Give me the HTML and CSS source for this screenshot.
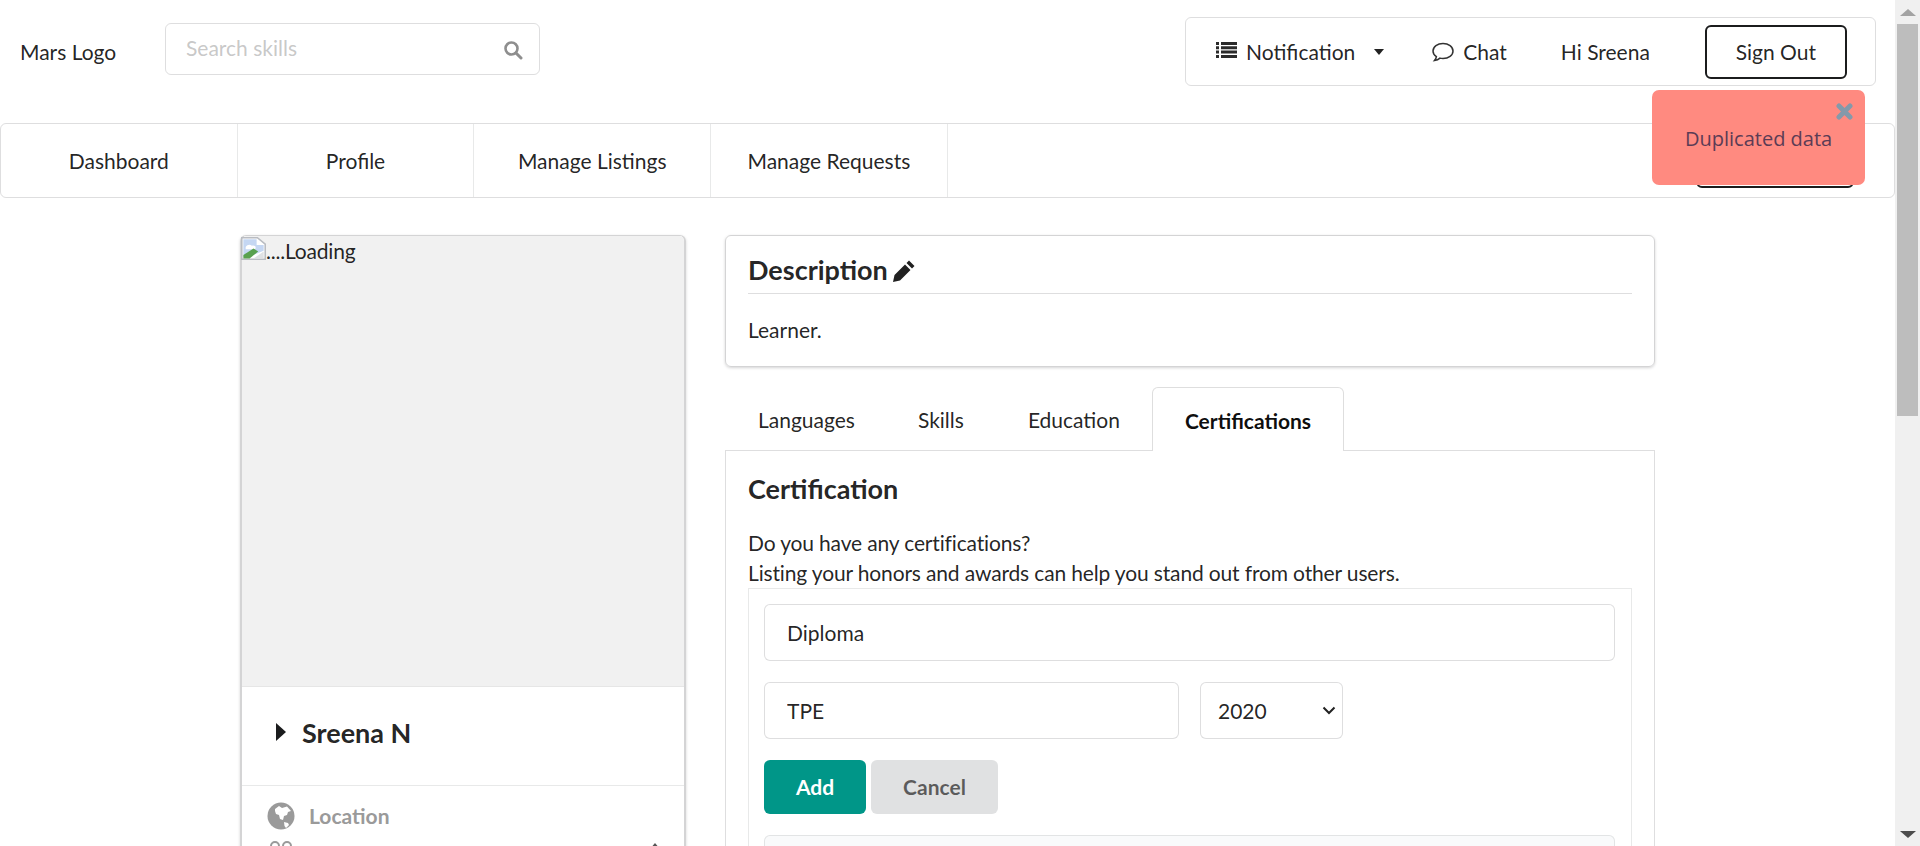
FILE: index.html
```html
<!DOCTYPE html>
<html lang="en">
<head>
<meta charset="utf-8">
<title>Profile</title>
<link rel="stylesheet" href="styles.css">
</head>
<body>
<div class="page">
  <div class="content">
    <header class="topbar">
      <div class="logo">Mars Logo</div>
      <div class="search">
        <span class="placeholder">Search skills</span>
        <svg class="search-icon" viewBox="0 0 20 20"><circle cx="8.5" cy="8.5" r="6" fill="none" stroke="currentColor" stroke-width="2.6"/><path d="M13 13l5 5" stroke="currentColor" stroke-width="3" stroke-linecap="round"/></svg>
      </div>
      <div class="usermenu">
        <svg class="list-icon" viewBox="0 0 21 16"><path d="M0 0h3v3H0zM5 0h16v3H5zM0 4.3h3v3H0zM5 4.3h16v3H5zM0 8.6h3v3H0zM5 8.6h16v3H5zM0 13h3v3H0zM5 13h16v3H5z" fill="currentColor"/></svg>
        <span class="notif">Notification</span>
        <span class="caret"></span>
        <svg class="chat-icon" viewBox="0 0 24 22"><path d="M12 2.500c5.500 0 10 3 10 7.500s-4.500 7.500-10 7.500c-1 0-2-.1-3-.4-1.300 1.200-3 2.100-5.500 2.400 1-1.200 1.700-2.500 1.900-3.900C3.400 14.300 2 12.300 2 10c0-4.500 4.500-7.500 10-7.500z" fill="none" stroke="currentColor" stroke-width="1.500"/></svg>
        <span class="chat">Chat</span>
        <span class="hi">Hi Sreena</span>
        <button class="signout">Sign Out</button>
      </div>
    </header>
    <nav class="mainnav">
      <a class="navitem">Dashboard</a>
      <a class="navitem">Profile</a>
      <a class="navitem">Manage Listings</a>
      <a class="navitem">Manage Requests</a>
      <span class="navbtn"></span>
    </nav>
    <main class="columns">
      <aside class="profile">
        <div class="photo">
          <svg class="broken" viewBox="0 0 16 16" preserveAspectRatio="none"><path d="M.5.5h10L15.500 5v10.500H.5z" fill="#fff" stroke="#b9bcc2"/><path d="M1.500 1.500h8.500v4h4.500v4L9 12 1.500 14z" fill="#c5d7f3"/><path d="M3 7c1-2 3-2 4-1 2-.5 3 1 2 2.500H3z" fill="#fff"/><path d="M1.500 15v-2.500L8 8l3 2-5.500 5z" fill="#59a14f"/><path d="M8 15l6.500-5v5z" fill="#dfe1e4"/></svg><span class="alt">....Loading</span>
        </div>
        <div class="namerow">
          <span class="tri"></span>
          <span class="name">Sreena N</span>
        </div>
        <div class="infolist">
          <div class="inforow">
            <svg class="globe" viewBox="0 0 28 28"><circle cx="14" cy="14" r="13.500" fill="currentColor"/><path d="M8 7l4-3 3 2 5-1.500 4 4.500-3 1-1 3-3 1-1 4-3-1-1-4-3-1-1-3zM17 20l4 1 1 2-3 3-1.500-2z" fill="#fff"/></svg>
            <span class="infolabel">Location</span>
          </div>
          <div class="inforow next">
            <svg class="langs" viewBox="0 0 28 12"><circle cx="8" cy="7" r="4" fill="none" stroke="currentColor" stroke-width="2"/><circle cx="20" cy="7" r="4" fill="none" stroke="currentColor" stroke-width="2"/></svg>
            <span class="upcaret"></span>
          </div>
        </div>
      </aside>
      <section class="details">
        <div class="desccard">
          <h2 class="desctitle">Description <svg class="pencil" viewBox="0 0 24 24"><path d="M17 1.500l5.500 5.500-2.500 2.500L14.500 4zM13 5.500L18.500 11 8 21.500 1 23l1.500-7z" fill="currentColor"/></svg></h2>
          <p class="desctext">Learner.</p>
        </div>
        <div class="tabs">
          <a class="tab">Languages</a>
          <a class="tab">Skills</a>
          <a class="tab">Education</a>
          <a class="tab active">Certifications</a>
        </div>
        <div class="tabpanel">
          <h3 class="paneltitle">Certification</h3>
          <p class="paneltext">Do you have any certifications?<br>Listing your honors and awards can help you stand out from other users.</p>
          <div class="formbox">
            <input class="field" value="Diploma">
            <div class="fieldrow">
              <input class="field grow" value="TPE">
              <div class="selectwrap">
                <select class="yearsel"><option>2020</option></select>
                <svg class="chevron" viewBox="0 0 14 9"><path d="M1.500 1.500L7 7l5.500-5.500" fill="none" stroke="#222" stroke-width="2"/></svg>
              </div>
            </div>
            <div class="actions">
              <button class="btn add">Add</button>
              <button class="btn cancel">Cancel</button>
            </div>
            <div class="tablehead"></div>
          </div>
        </div>
      </section>
    </main>
  </div>
  <div class="scrollbar">
    <span class="arrow up"></span>
    <span class="track"><span class="thumb"></span></span>
    <span class="arrow down"></span>
  </div>
</div>
<div class="toast">
  <svg class="toast-x" viewBox="0 0 17 17"><path d="M3 3l11 11M14 3L3 14" stroke="currentColor" stroke-width="5" stroke-linecap="round"/></svg>
  <span class="toast-text">Duplicated data</span>
</div>
</body>
</html>
```
FILE: styles.css
```css
* { box-sizing: border-box; }
html, body { margin: 0; height: 100%; overflow: hidden; }
body { font-family: Lato, "Helvetica Neue", Arial, sans-serif; font-size: 21px; line-height: 30px; color: rgba(0,0,0,.87); background: #fff; }
.page { display: flex; height: 846px; overflow: hidden; }
.content { width: 1895px; flex: none; overflow: hidden; }

.topbar { display: flex; align-items: flex-start; height: 123px; padding: 17px 19px 0 20px; }
.logo { margin-top: 20px; width: 145px; font-size: 21px; }
.search { margin-top: 6px; width: 375px; height: 52px; border: 1px solid rgba(34,36,38,.15); border-radius: 6px; display: flex; align-items: center; justify-content: space-between; padding: 0 16px 2px 20px; }
.placeholder { color: rgba(191,191,191,.87); }
.search-icon { width: 20px; height: 20px; color: #8e8e8e; margin-top: 4px; }
.usermenu { margin-left: auto; width: 691px; height: 69px; border: 1px solid rgba(34,36,38,.15); border-radius: 6px; display: flex; align-items: center; padding-left: 30px; }
.list-icon { width: 21px; height: 16px; color: #2b2b2b; margin-top: -3px; }
.notif { margin-left: 9px; }
.caret { margin-left: 19px; border: 5.500px solid transparent; border-top: 6px solid #222; border-bottom: 0; }
.chat-icon { width: 24px; height: 22px; margin-left: 47px; color: #333; }
.chat { margin-left: 8px; }
.hi { margin-left: 54px; }
.signout { margin-left: 55px; width: 142px; height: 54px; background: #fff; border: 2px solid #1b1c1d; border-radius: 6px; font: inherit; color: rgba(0,0,0,.87); padding: 0; }

.mainnav { display: flex; height: 75px; border: 1px solid rgba(34,36,38,.15); border-radius: 6px; align-items: stretch; padding-right: 40px; }
.navitem { width: 236.7px; border-right: 1px solid rgba(34,36,38,.1); display: flex; align-items: center; justify-content: center; }
.navbtn { margin-left: auto; align-self: flex-end; width: 158px; height: 54px; margin-bottom: 9px; border: 2px solid #1b1c1d; border-radius: 6px; }

.columns { display: flex; align-items: flex-start; padding: 37px 0 0 240px; gap: 39px; }
.profile { width: 446px; flex: none; border: 1px solid #d4d4d5; border-width: 1px 2px 0; border-radius: 6px 6px 0 0; box-shadow: 0 1px 3px #d4d4d5; }
.photo { height: 451px; background: #f1f1f1; border-bottom: 1px solid #e6e6e6; display: flex; align-items: flex-start; border-radius: 5px 5px 0 0; }
.broken { width: 25px; height: 23px; flex: none; margin: 1px 0 0 -1px; }
.alt { letter-spacing: -.2px; }
.namerow { height: 99px; display: flex; align-items: center; padding: 0 0 7px 34px; border-bottom: 1px solid rgba(34,36,38,.1); }
.tri { border: 9px solid transparent; border-left: 10px solid #1b1c1d; border-right: 0; margin-top: -2px; }
.name { margin-left: 16px; font-size: 27px; font-weight: 700; }
.infolist { padding: 16px 26px 0 25px; color: #9a9a9a; }
.inforow { display: flex; align-items: center; height: 28px; }
.inforow.next { margin-top: 9px; justify-content: space-between; height: 12px; align-items: flex-start; }
.globe { width: 28px; height: 28px; color: #9a9a9a; }
.infolabel { margin-left: 14px; font-weight: 700; }
.langs { width: 28px; height: 12px; }
.upcaret { margin-right: -2px; margin-top: 4px; border: 5px solid transparent; border-bottom: 6px solid #555; border-top: 0; }

.details { width: 930px; flex: none; }
.desccard { height: 132px; border: 1px solid #d4d4d5; border-radius: 6px; box-shadow: 0 1px 3px #d4d4d5; padding: 19px 22px 0; }
.desctitle { margin: 0; height: 39px; font-size: 27px; line-height: 30px; font-weight: 700; border-bottom: 1px solid rgba(34,36,38,.15); }
.pencil { width: 24px; height: 24px; vertical-align: -3px; margin-left: -2px; }
.desctext { margin: 21px 0 0; }

.tabs { display: flex; height: 63px; margin-top: 20px; align-items: stretch; }
.tab { display: flex; align-items: center; padding: 3px 32px 0; }
.tab:first-child { padding-left: 33px; padding-right: 31px; }
.tab.active { font-weight: 700; border: 1px solid rgba(34,36,38,.15); border-bottom: 0; border-radius: 6px 6px 0 0; background: #fff; margin-bottom: -1px; position: relative; color: rgba(0,0,0,.95); }
.tabpanel { border: 1px solid rgba(34,36,38,.15); padding: 19px 22px 0 22px; height: 460px; }
.paneltitle { margin: 0; font-size: 27px; line-height: 38px; font-weight: 700; }
.paneltext { margin: 20px 0 0; letter-spacing: -.15px; }
.formbox { border: 1px solid rgba(34,36,38,.1); border-bottom: 0; padding: 15px 16px 0 15px; }
.field { display: block; width: 100%; height: 57px; padding: 0 22px; border: 1px solid rgba(34,36,38,.15); border-radius: 6px; font: inherit; color: rgba(0,0,0,.87); background: #fff; }
.fieldrow { display: flex; gap: 21px; margin-top: 21px; }
.field.grow { width: 415px; flex: none; }
.selectwrap { position: relative; width: 143px; height: 57px; }
.yearsel { appearance: none; width: 100%; height: 100%; padding: 0 0 0 17px; border: 1px solid rgba(34,36,38,.15); border-radius: 6px; font: inherit; color: rgba(0,0,0,.87); background: #fff; }
.chevron { position: absolute; right: 7px; top: 24px; width: 14px; height: 9px; pointer-events: none; }
.actions { display: flex; gap: 5px; margin-top: 21px; }
.btn { height: 54px; border: 0; border-radius: 6px; font: inherit; font-weight: 700; padding: 0; }
.add { width: 102px; background: #009688; color: #fff; }
.cancel { width: 127px; background: #e0e1e2; color: rgba(0,0,0,.6); }
.tablehead { margin-top: 21px; height: 60px; background: #f9fafb; border: 1px solid rgba(34,36,38,.1); border-radius: 6px 6px 0 0; }

.scrollbar { width: 25px; flex: none; background: #f0f0f0; display: flex; flex-direction: column; align-items: center; justify-content: space-between; height: 846px; }
.arrow { flex: none; height: 24px; display: flex; align-items: center; }
.arrow.up::before { content: ""; border: 8px solid transparent; border-bottom: 7px solid #a3a3a3; border-top: 0; }
.arrow.down::before { content: ""; border: 8px solid transparent; border-top: 7px solid #4d4d4d; border-bottom: 0; }
.track { flex: 1; width: 100%; display: block; padding: 0 2px; }
.thumb { display: block; height: 392px; background: #bdbdbd; }

.toast { position: absolute; left: 1652px; top: 90px; width: 213px; height: 95px; background: #ff8a80; border-radius: 7px; font-family: "Open Sans", sans-serif; font-size: 20px; color: #5b3c55; }
.toast-x { position: absolute; left: 184px; top: 13px; width: 17px; height: 17px; color: #8499aa; }
.toast-text { position: absolute; left: 33px; top: 34px; white-space: nowrap; }
```
